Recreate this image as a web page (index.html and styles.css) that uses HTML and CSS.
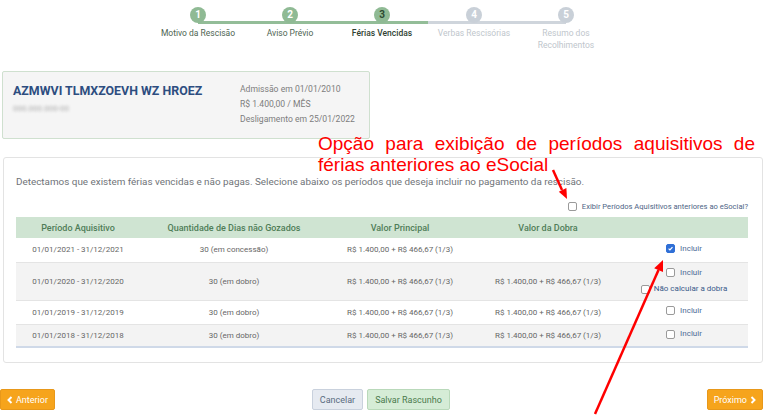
FILE: index.html
```html
<!DOCTYPE html>
<html lang="pt-BR">
<head>
  <meta charset="UTF-8" />
  <meta name="viewport" content="width=device-width, initial-scale=1.0"/>
  <title>Rescisão - Férias Vencidas</title>
  <link rel="stylesheet" href="styles.css">
</head>
<body>
  <!-- Etapas -->
  <ol class="steps">
    <li class="step done"><span class="dot">1</span><span class="label">Motivo da Rescisão</span></li>
    <li class="step done"><span class="dot">2</span><span class="label">Aviso Prévio</span></li>
    <li class="step current"><span class="dot">3</span><span class="label">Férias Vencidas</span></li>
    <li class="step"><span class="dot">4</span><span class="label">Verbas Rescisórias</span></li>
    <li class="step"><span class="dot">5</span><span class="label">Resumo dos<br>Recolhimentos</span></li>
  </ol>

  <div class="employee">
    <div class="emp-id">
      <h2>AZMWVI TLMXZOEVH WZ HROEZ</h2>
      <p class="cpf">000.000.000-00</p>
    </div>
    <div class="emp-info">
      <p>Admissão em 01/01/2010</p>
      <p>R$ 1.400,00 / MÊS</p>
      <p>Desligamento em 25/01/2022</p>
    </div>
  </div>

  <section class="panel">
    <p class="intro">Detectamos que existem férias vencidas e não pagas. Selecione abaixo os períodos que deseja incluir no pagamento da rescisão.</p>
    <label class="toggle"><span class="cb"></span>Exibir Períodos Aquisitivos anteriores ao eSocial?</label>

    <table class="periods">
      <colgroup>
        <col style="width:124px"><col style="width:188px"><col style="width:144px"><col style="width:152px"><col style="width:124px">
      </colgroup>
      <thead>
        <tr><th>Período Aquisitivo</th><th>Quantidade de Dias não Gozados</th><th>Valor Principal</th><th>Valor da Dobra</th><th></th></tr>
      </thead>
      <tbody>
        <tr>
          <td>01/01/2021 - 31/12/2021</td>
          <td>30 (em concessão)</td>
          <td>R$ 1.400,00 + R$ 466,67 (1/3)</td>
          <td></td>
          <td class="opts">
            <label class="opt"><span class="cb checked"><svg viewBox="0 0 10 10"><path d="M2.3 5.2 4.2 7.1 7.8 3" fill="none" stroke="#fff" stroke-width="1.7"/></svg></span>Incluir</label>
          </td>
        </tr>
        <tr class="tall">
          <td>01/01/2020 - 31/12/2020</td>
          <td>30 (em dobro)</td>
          <td>R$ 1.400,00 + R$ 466,67 (1/3)</td>
          <td>R$ 1.400,00 + R$ 466,67 (1/3)</td>
          <td class="opts">
            <label class="opt"><span class="cb"></span>Incluir</label>
            <label class="opt alt"><span class="cb"></span>Não calcular a dobra</label>
          </td>
        </tr>
        <tr>
          <td>01/01/2019 - 31/12/2019</td>
          <td>30 (em dobro)</td>
          <td>R$ 1.400,00 + R$ 466,67 (1/3)</td>
          <td>R$ 1.400,00 + R$ 466,67 (1/3)</td>
          <td class="opts"><label class="opt"><span class="cb"></span>Incluir</label></td>
        </tr>
        <tr>
          <td>01/01/2018 - 31/12/2018</td>
          <td>30 (em dobro)</td>
          <td>R$ 1.400,00 + R$ 466,67 (1/3)</td>
          <td>R$ 1.400,00 + R$ 466,67 (1/3)</td>
          <td class="opts"><label class="opt"><span class="cb"></span>Incluir</label></td>
        </tr>
      </tbody>
    </table>
  </section>

  <div class="actions">
    <button class="btn btn-orange"><svg viewBox="0 0 8 10" width="6" height="8"><path d="M6 1 2 5l4 4" fill="none" stroke="#fff" stroke-width="2.6"/></svg>Anterior</button>
    <div class="mid">
      <button class="btn btn-gray">Cancelar</button>
      <button class="btn btn-green">Salvar Rascunho</button>
    </div>
    <button class="btn btn-orange">Próximo<svg viewBox="0 0 8 10" width="6" height="8"><path d="M2 1l4 4-4 4" fill="none" stroke="#fff" stroke-width="2.6"/></svg></button>
  </div>

  <!-- Anotação por cima da tela -->
  <div class="note">
    <span class="note-l1">Opção para exibição de períodos aquisitivos de</span>
    <span class="note-l2">férias anteriores ao eSocial</span>
  </div>
  <svg class="arrows" viewBox="0 0 768 419" width="768" height="419">
    <line x1="553" y1="170" x2="562" y2="190" stroke="#ff0000" stroke-width="2.5"/>
    <polygon points="567,199 558.8,191.8 566.4,188.1" fill="#ff0000"/>
    <line x1="595" y1="414" x2="658.5" y2="270" stroke="#ff0000" stroke-width="2.5"/>
    <polygon points="663,260 654.2,268.2 663,272" fill="#ff0000"/>
  </svg>
</body>
</html>
```

FILE: styles.css
```css
* { margin: 0; padding: 0; box-sizing: border-box; }
body {
  font-family: Roboto, "Noto Sans", sans-serif;
  background: #fff; color: #666;
  width: 768px; height: 419px; overflow: hidden;
  position: relative;
}

/* Etapas */
.steps {
  list-style: none; display: flex;
  width: 460px; margin-left: 152px; padding-top: 7px;
}
.step {
  width: 92px; position: relative;
  display: flex; flex-direction: column; align-items: center;
}
.step::before, .step::after {
  content: ""; position: absolute; top: 13.5px;
  width: 50%; height: 3px; background: #cfd5dc;
}
.step::before { left: 0; }
.step::after { left: 50%; }
.step:first-child::before, .step:last-child::after { display: none; }
.step.done::before, .step.done::after,
.step.current::before, .step.current::after { background: #93bd98; }
.dot {
  position: relative; z-index: 1;
  width: 16px; height: 16px; border-radius: 50%;
  background: #c9d0d8; color: #fff;
  font-size: 10px; font-weight: 700; line-height: 16px; text-align: center;
}
.done .dot, .current .dot { background: #8fba94; }
.current .dot { color: #2d4a30; }
.label {
  margin-top: 4px; font-size: 8.5px; line-height: 12px;
  text-align: center; color: #c0c6cc;
}
.done .label { color: #4e6552; }
.current .label { color: #2f3f32; font-weight: 500; }

/* Cartão do funcionário */
.employee {
  display: flex; width: 368px; height: 68px;
  margin: 20px 0 0 2px;
  background: #f5f5f5; border: 1px solid #cfe0cf; border-radius: 2px;
}
.emp-id { flex: 0 0 237px; padding: 11px 0 0 10px; }
.emp-id h2 {
  font-size: 12.4px; line-height: 16px; font-weight: 700; color: #2d4d80;
}
.cpf {
  margin-top: 4px; font-size: 8px; line-height: 12px;
  color: #aaa; filter: blur(1.4px);
}
.emp-info { padding-top: 10px; }
.emp-info p { font-size: 8.6px; line-height: 15px; color: #7d7d7d; }

/* Painel principal */
.panel {
  width: 760px; margin: 18px 0 0 3px;
  padding: 18px 14px 14px 12px;
  border: 1px solid #e3e3e3; border-radius: 3px;
}
.intro { font-size: 9.9px; line-height: 12px; color: #6f7378; }
.toggle {
  display: flex; justify-content: flex-end; align-items: center; gap: 5px;
  margin-top: 12px; height: 12px;
  font-size: 7.6px; color: #4d6485;
}
.cb {
  display: inline-block; width: 9px; height: 9px; flex: none;
  border: 1px solid #9a9a9a; border-radius: 2px; background: #fff;
}
.cb.checked { background: #2f6fd6; border-color: #2f6fd6; }
.cb svg { display: block; width: 100%; height: 100%; }

.periods {
  width: 732px; margin-top: 5px;
  border-collapse: collapse; table-layout: fixed;
  border-bottom: 2px solid #cfd9e8;
}
.periods th {
  height: 21px; background: #cfe4d2; color: #4f7d58;
  font-size: 9px; font-weight: 500; text-align: center;
}
.periods td {
  height: 24px; text-align: center; vertical-align: middle;
  font-size: 8px; color: #666;
  border-bottom: 1px solid #e4e4e4;
}
.periods tbody tr:nth-child(even) td { background: #f3f3f3; }
.periods tr.tall td { height: 38px; }
.periods tbody tr:last-child td { border-bottom: none; height: 23px; }
.opts { line-height: 14px; padding-right: 4px; }
.opt {
  display: inline-flex; align-items: center; gap: 5px;
  font-size: 8px; color: #4c6a96;
}
.opt.alt { color: #3a5a8a; gap: 4px; }
.opts .opt + .opt { display: flex; justify-content: center; }

/* Botões */
.actions {
  display: flex; justify-content: space-between; align-items: center;
  width: 763px; margin-top: 26px;
}
.mid { display: flex; gap: 4px; }
.btn {
  display: inline-flex; align-items: center; gap: 3px;
  height: 21px; padding: 0 6px;
  font-family: Roboto, sans-serif; font-size: 9px;
  border: 1px solid; border-radius: 2px; cursor: pointer;
}
.btn-orange { background: #f6a41c; border-color: #e8981a; color: #fff; }
.btn-gray { background: #e6eaf1; border-color: #c9d1dd; color: #5a6a80; padding: 0 7px; }
.btn-green { background: #d5ecd6; border-color: #b9d9ba; color: #4a7a4c; padding: 0 7px; }

/* Anotação */
.note {
  position: absolute; top: 133px; left: 318px; width: 437px;
  font-family: "Liberation Sans", Arial, sans-serif;
  font-size: 19px; line-height: 21px; color: #ff0000;
}
.note span { display: block; }
.note-l1 { text-align: justify; text-align-last: justify; }
.arrows { position: absolute; top: 0; left: 0; pointer-events: none; }
```
